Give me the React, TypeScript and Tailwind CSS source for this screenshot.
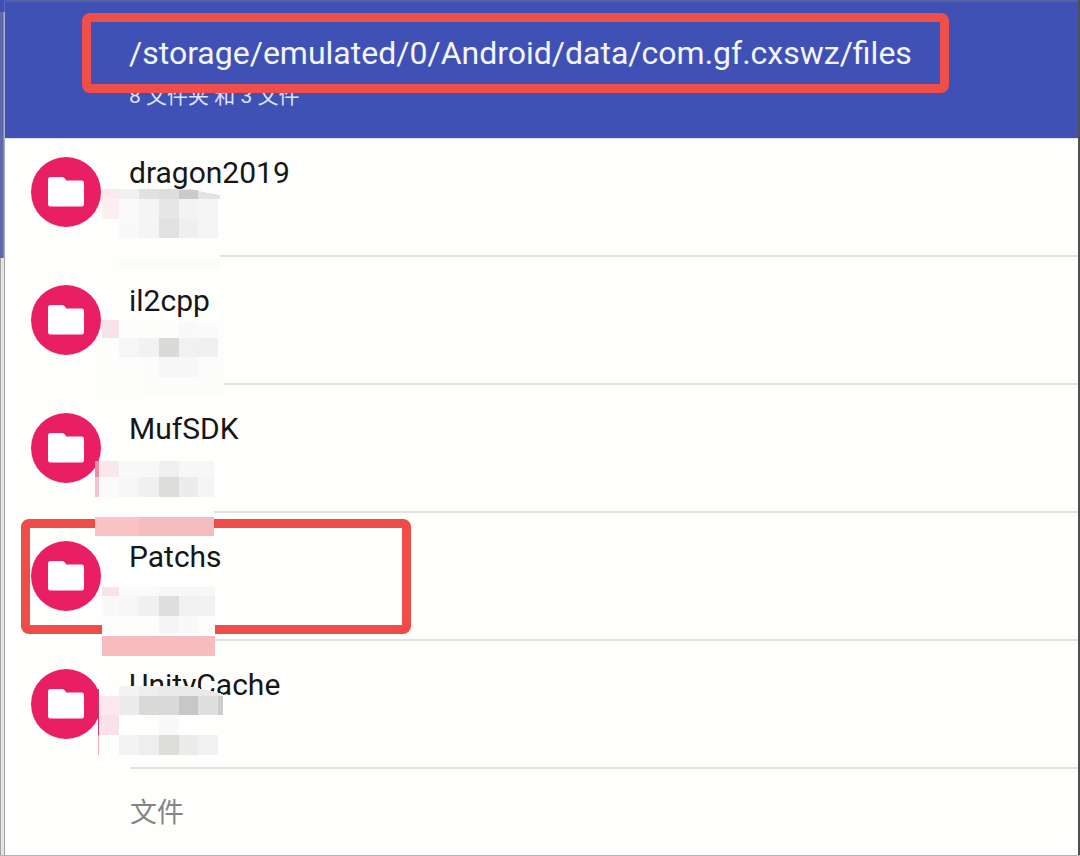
type Cell = [x: number, y: number, w: number, h: number, fill: string];

type Folder = {
  name: string;
  marked?: boolean;
  cells: Cell[];
  // sloping top edge of a patch: polygon points and fill
  slope?: [points: string, fill: string];
};

// Pixelated patches over the folder details, measured from the icon's top edge.
const folders: Folder[] = [
  {
    name: "dragon2019",
    slope: ["84,32 96,32 103,34 125,38 125,42 84,42", "#e3e3e3"],
    cells: [
      [7, 32, 77, 81, "#fefefd"],
      [84, 42, 41, 71, "#fefefd"],
      [7, 32, 17, 10, "#fbe9ec"],
      [24, 32, 20, 10, "#f1f1f1"],
      [44, 32, 20, 10, "#e1e1e1"],
      [64, 32, 20, 10, "#dedede"],
      [84, 33, 19, 9, "#cacaca"],
      [7, 42, 17, 20, "#fdeff1"],
      [24, 42, 20, 20, "#fafafa"],
      [44, 42, 20, 20, "#f5f5f5"],
      [64, 42, 20, 20, "#e6e6e6"],
      [84, 42, 19, 20, "#f3f3f2"],
      [103, 42, 20, 20, "#f5f5f7"],
      [24, 62, 20, 19, "#f9f9f9"],
      [44, 62, 20, 19, "#f5f5f6"],
      [64, 62, 20, 19, "#e1e1e1"],
      [84, 62, 19, 19, "#efefee"],
      [103, 62, 20, 19, "#f5f5f7"],
      [24, 102, 101, 10, "#fbfbfa"],
    ],
  },
  {
    name: "il2cpp",
    cells: [
      [7, 35, 122, 78, "#fdfdfc"],
      [7, 35, 17, 18, "#f8e2ea"],
      [84, 37, 19, 16, "#f9f9f9"],
      [103, 40, 20, 13, "#fafafa"],
      [24, 53, 20, 19, "#f6f6f6"],
      [44, 53, 20, 19, "#f2f2f2"],
      [64, 53, 20, 19, "#dadad9"],
      [84, 53, 19, 19, "#f1f1f2"],
      [103, 53, 20, 19, "#f0f0f1"],
      [44, 72, 85, 41, "#fcfcfb"],
      [64, 72, 39, 20, "#f7f7f7"],
    ],
  },
  {
    name: "MufSDK",
    cells: [
      [0, 48, 119, 75, "#fefefd"],
      [0, 48, 4, 16, "#e58fa8"],
      [4, 48, 20, 16, "#fae7ec"],
      [24, 48, 20, 16, "#f9f9f9"],
      [44, 48, 20, 16, "#f8f8f8"],
      [64, 48, 20, 16, "#f0f0f0"],
      [84, 48, 35, 16, "#f7f7f7"],
      [0, 64, 4, 20, "#f3c3d0"],
      [4, 64, 20, 20, "#fafafa"],
      [24, 64, 20, 20, "#f6f6f7"],
      [44, 64, 20, 20, "#f0f0f0"],
      [64, 64, 20, 20, "#dcdcdb"],
      [84, 64, 19, 20, "#ececec"],
      [103, 64, 16, 20, "#f5f5f5"],
      [0, 104, 44, 19, "#f9c2c4"],
      [44, 104, 75, 19, "#f6bdc0"],
    ],
  },
  {
    name: "Patchs",
    marked: true,
    cells: [
      [7, 46, 113, 69, "#fdfdfc"],
      [7, 46, 17, 9, "#f6e4ec"],
      [24, 46, 40, 9, "#fafafa"],
      [64, 46, 56, 9, "#f7f7f7"],
      [7, 55, 17, 20, "#f9f9fa"],
      [24, 55, 20, 20, "#f6f6f6"],
      [44, 55, 20, 20, "#f0f0f0"],
      [64, 55, 20, 20, "#dededd"],
      [84, 55, 19, 20, "#f1f1f1"],
      [103, 55, 17, 20, "#f2f2f2"],
      [64, 75, 20, 18, "#f5f5f5"],
      [84, 75, 19, 18, "#f9f9f8"],
      [7, 95, 113, 20, "#f6bcbf"],
    ],
  },
  {
    name: "UnityCache",
    slope: ["24,17 92,17 103,19 128,25 128,27 24,27", "#e9e9e9"],
    cells: [
      [4, 17, 20, 69, "#fefefd"],
      [24, 27, 99, 59, "#fefefd"],
      [3, 20, 1, 46, "#c43c68"],
      [3, 66, 1, 20, "#efafc2"],
      [24, 17, 20, 10, "#f4f4f4"],
      [44, 17, 20, 10, "#eeeeee"],
      [4, 27, 20, 19, "#fbe8ee"],
      [24, 27, 20, 19, "#ececec"],
      [44, 27, 20, 19, "#d9d9d8"],
      [64, 27, 20, 19, "#d9d9d9"],
      [84, 27, 19, 19, "#c7c7c7"],
      [103, 27, 20, 19, "#dfdfe0"],
      [123, 27, 5, 19, "#cdcdce"],
      [4, 46, 20, 20, "#fae1e9"],
      [64, 46, 20, 20, "#f9f9f9"],
      [24, 66, 20, 20, "#f3f3f3"],
      [44, 66, 20, 20, "#eeeeee"],
      [64, 66, 20, 20, "#dcdcdb"],
      [84, 66, 19, 20, "#ebebea"],
      [103, 66, 20, 20, "#f1f1f1"],
    ],
  },
];

function FolderIcon() {
  return (
    <span className="flex size-[70px] shrink-0 items-center justify-center rounded-full bg-[#e91e63]">
      <svg viewBox="0 0 36 30" className="h-[30px] w-9" fill="#fff" aria-hidden="true">
        <path d="M2.5 0H14.6a2 2 0 0 1 1.4.6L18.4 3.4H33.5A2.5 2.5 0 0 1 36 5.9V27a2.5 2.5 0 0 1-2.5 2.5h-31A2.5 2.5 0 0 1 0 27V2.5A2.5 2.5 0 0 1 2.5 0Z" />
      </svg>
    </span>
  );
}

function Mosaic({ cells, slope }: Pick<Folder, "cells" | "slope">) {
  return (
    <svg
      width="130"
      height="124"
      shapeRendering="crispEdges"
      aria-hidden="true"
      className="pointer-events-none absolute top-0 left-[90px] z-20"
    >
      {slope && <polygon points={slope[0]} fill={slope[1]} />}
      {cells.map(([x, y, w, h, fill], i) => (
        <rect key={i} x={x} y={y} width={w} height={h} fill={fill} />
      ))}
    </svg>
  );
}

function FolderRow({ folder }: { folder: Folder }) {
  return (
    <li className="pt-7 first:pt-[19px]">
      <div className="relative">
        <button type="button" className="flex h-[98px] w-full items-start pl-[26px] text-left">
          <FolderIcon />
          <span className="ml-7 text-[30px] leading-8 text-[#161616]">{folder.name}</span>
        </button>
        {folder.marked && (
          <div className="pointer-events-none absolute -top-[22px] left-4 z-10 h-[115px] w-[390px] rounded-lg border-9 border-[#ef4b48]" />
        )}
        <Mosaic cells={folder.cells} slope={folder.slope} />
      </div>
      <div className="ml-[125px] h-0.5 bg-[#e2e2e2]" />
    </li>
  );
}

export default function App() {
  return (
    <div className="flex min-h-screen border-b border-[#b5b5b5] bg-[#fefefd] font-[Roboto,'Noto_Sans_CJK_SC',sans-serif]">
      <div className="flex w-[5px] shrink-0 flex-col">
        <div className="h-3 bg-[#4150b5]" />
        <div className="h-[246px] border-r border-l-3 border-r-[#a4a8c4] border-l-[#5d69ab] bg-[#8189b8]" />
        <div className="grow border-x border-[#a3a3a3] bg-[#e4e4e4]" />
      </div>

      <div className="min-w-0 grow">
        <header className="h-[138px] border-t-2 border-[#5660a4] bg-[#4051b5] pt-[11px] pl-[77px] shadow-[0_1px_1px_#dfe3fb]">
          <h1 className="relative z-10 h-20 w-fit rounded-lg border-9 border-[#f04e4b] pr-7 pl-[38px] text-[32px] leading-[62px] whitespace-nowrap text-[#f4f6ff]">
            /storage/emulated/0/Android/data/com.gf.cxswz/files
          </h1>
          <p className="-mt-[13px] pl-[47px] text-[21px] leading-8 text-[#dfe3fa]">8 文件夹 和 3 文件</p>
        </header>

        <main>
          <ul>
            {folders.map((folder) => (
              <FolderRow key={folder.name} folder={folder} />
            ))}
          </ul>
          <h2 className="pt-6 pl-[125px] text-[27px] leading-10 text-[#858585]">文件</h2>
        </main>
      </div>

      <div className="w-0.5 shrink-0 bg-[#505050]" />
    </div>
  );
}
